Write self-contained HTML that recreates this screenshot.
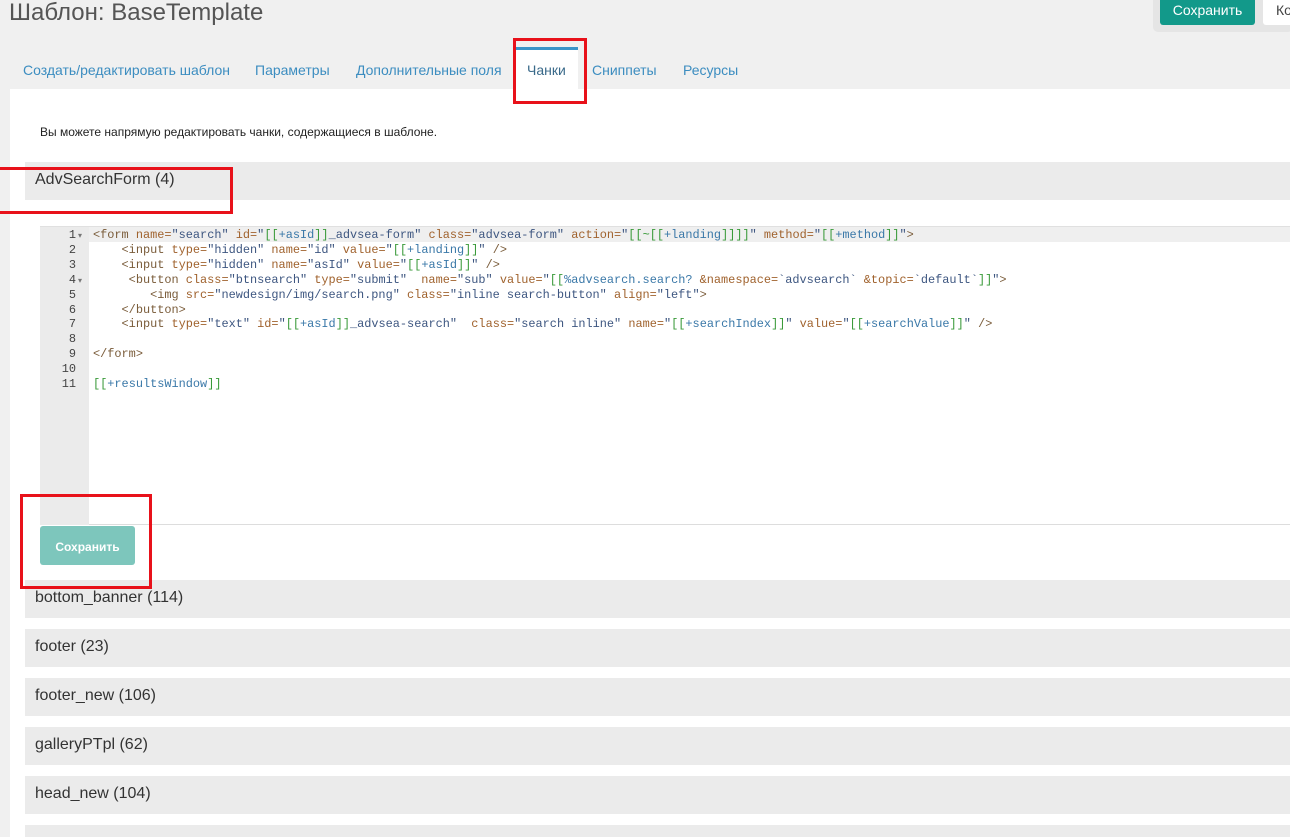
<!DOCTYPE html>
<html><head><meta charset="utf-8"><style>
*{box-sizing:border-box;margin:0;padding:0}
html,body{width:1290px;height:837px;overflow:hidden}
body{background:#f0f0f0;font-family:"Liberation Sans",Arial,sans-serif;position:relative;color:#333}
.abs{position:absolute}
h1{position:absolute;left:9px;top:-1px;font-size:24px;font-weight:normal;color:#555}
.tab{position:absolute;top:62px;font-size:14px;color:#3c8dc0}
.panel{position:absolute;left:10px;top:89px;width:1280px;height:748px;background:#fff}
.bar{position:absolute;left:25px;width:1265px;height:38px;background:#ebebeb;font-size:16px;color:#333;padding:9px 0 0 10px}
.red{position:absolute;border:3px solid #e8111a}
.code{position:absolute;left:93px;top:228px;font-family:"Liberation Mono",monospace;font-size:11.9px;line-height:14.9px;white-space:pre;color:#7a5c3a}
.ln{position:absolute;left:41px;top:228px;width:35px;text-align:right;font-family:"Liberation Mono",monospace;font-size:11.9px;line-height:14.9px;white-space:pre;color:#444}
.arr{position:absolute;left:78px;font-size:8px;color:#777;line-height:10px}
.a{color:#a0622d}.s{color:#3d5680}.g{color:#3a9a3a}.v{color:#3a78a8}
</style></head><body>
<h1>Шаблон: BaseTemplate</h1>
<div class="abs" style="left:1153px;top:-5px;width:140px;height:37px;background:#e5e5e5;border-radius:5px"></div>
<div class="abs" style="left:1160px;top:-4px;width:95px;height:29px;background:#12998a;border-radius:3px;color:#fff;font-size:14px;text-align:center;padding-top:6px">Сохранить</div>
<div class="abs" style="left:1263px;top:-4px;width:40px;height:29px;background:#fff;border-radius:3px;font-size:14px;padding:6px 0 0 13px;color:#444">Ко</div>

<div class="tab" style="left:23px">Создать/редактировать шаблон</div>
<div class="tab" style="left:255px">Параметры</div>
<div class="tab" style="left:356px">Дополнительные поля</div>
<div class="abs" style="left:516px;top:47px;width:62px;height:45px;background:#fff;border-top:3px solid #3a94c8"></div>
<div class="tab" style="left:527px;color:#3a6a8a">Чанки</div>
<div class="tab" style="left:592px">Сниппеты</div>
<div class="tab" style="left:683px">Ресурсы</div>

<div class="panel"></div>
<div class="abs" style="left:40px;top:125px;font-size:12px;color:#222">Вы можете напрямую редактировать чанки, содержащиеся в шаблоне.</div>
<div class="bar" style="top:162px">AdvSearchForm (4)</div>

<div class="abs" style="left:40px;top:226px;width:1250px;height:299px;border-top:1px solid #e0e0e0;border-bottom:1px solid #ddd"></div>
<div class="abs" style="left:40px;top:227px;width:49px;height:298px;background:#ebebeb"></div>
<div class="abs" style="left:89px;top:227px;width:1201px;height:15px;background:#efefef"></div>
<div class="ln">1
2
3
4
5
6
7
8
9
10
11</div>
<div class="arr" style="top:231px">▾</div>
<div class="arr" style="top:276px">▾</div>
<div class="code">&lt;form <span class="a">name=</span><span class="s">"search"</span> <span class="a">id=</span><span class="s">"</span><span class="g">[[</span><span class="v">+asId</span><span class="g">]]</span><span class="s">_advsea-form"</span> <span class="a">class=</span><span class="s">"advsea-form"</span> <span class="a">action=</span><span class="s">"</span><span class="g">[[~[[</span><span class="v">+landing</span><span class="g">]]]]</span><span class="s">"</span> <span class="a">method=</span><span class="s">"</span><span class="g">[[</span><span class="v">+method</span><span class="g">]]</span><span class="s">"</span>&gt;
    &lt;input <span class="a">type=</span><span class="s">"hidden"</span> <span class="a">name=</span><span class="s">"id"</span> <span class="a">value=</span><span class="s">"</span><span class="g">[[</span><span class="v">+landing</span><span class="g">]]</span><span class="s">"</span> /&gt;
    &lt;input <span class="a">type=</span><span class="s">"hidden"</span> <span class="a">name=</span><span class="s">"asId"</span> <span class="a">value=</span><span class="s">"</span><span class="g">[[</span><span class="v">+asId</span><span class="g">]]</span><span class="s">"</span> /&gt;
     &lt;button <span class="a">class=</span><span class="s">"btnsearch"</span> <span class="a">type=</span><span class="s">"submit"</span>  <span class="a">name=</span><span class="s">"sub"</span> <span class="a">value=</span><span class="s">"</span><span class="g">[[</span><span class="v">%advsearch.search? </span><span class="a">&amp;namespace=</span><span class="s">`advsearch`</span> <span class="a">&amp;topic=</span><span class="s">`default`</span><span class="g">]]</span><span class="s">"</span>&gt;
        &lt;img <span class="a">src=</span><span class="s">"newdesign/img/search.png"</span> <span class="a">class=</span><span class="s">"inline search-button"</span> <span class="a">align=</span><span class="s">"left"</span>&gt;
    &lt;/button&gt;
    &lt;input <span class="a">type=</span><span class="s">"text"</span> <span class="a">id=</span><span class="s">"</span><span class="g">[[</span><span class="v">+asId</span><span class="g">]]</span><span class="s">_advsea-search"</span>  <span class="a">class=</span><span class="s">"search inline"</span> <span class="a">name=</span><span class="s">"</span><span class="g">[[</span><span class="v">+searchIndex</span><span class="g">]]</span><span class="s">"</span> <span class="a">value=</span><span class="s">"</span><span class="g">[[</span><span class="v">+searchValue</span><span class="g">]]</span><span class="s">"</span> /&gt;

&lt;/form&gt;

<span class="g">[[</span><span class="v">+resultsWindow</span><span class="g">]]</span></div>

<div class="abs" style="left:40px;top:526px;width:95px;height:39px;background:#7dc6bc;border-radius:3px;color:#fff;font-size:12px;font-weight:bold;text-align:center;padding-top:14px">Сохранить</div>

<div class="bar" style="top:580px">bottom_banner (114)</div>
<div class="bar" style="top:629px">footer (23)</div>
<div class="bar" style="top:678px">footer_new (106)</div>
<div class="bar" style="top:727px">galleryPTpl (62)</div>
<div class="bar" style="top:776px">head_new (104)</div>
<div class="bar" style="top:825px;height:12px"></div>

<div class="red" style="left:513px;top:38px;width:74px;height:66px"></div>
<div class="red" style="left:-5px;top:167px;width:238px;height:47px"></div>
<div class="red" style="left:20px;top:494px;width:132px;height:95px"></div>
</body></html>
